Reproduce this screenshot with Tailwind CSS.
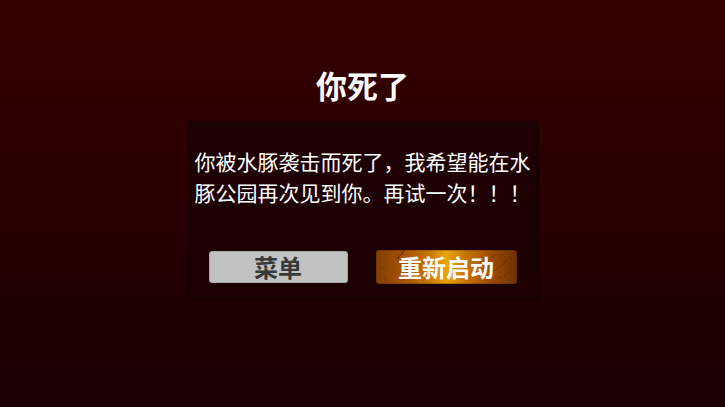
<!DOCTYPE html>
<html lang="zh-CN">
<head>
    <meta charset="UTF-8">
    <meta name="viewport" content="width=device-width, initial-scale=1.0">
    <title>你死了</title>
    <script src="https://cdn.jsdelivr.net/npm/@tailwindcss/browser@4"></script>
    <style>
        body {
            font-family: 'Noto Sans CJK SC', sans-serif;
        }
    </style>
</head>
<body class="bg-[#250001]">
    <main class="min-h-screen flex flex-col items-center px-4 pt-[65px] pb-8 text-white bg-linear-to-b from-[#360001] via-[#290001] to-[#1a0001]">
        <h1 class="text-[31px] leading-10 font-bold">你死了</h1>

        <!-- Message panel -->
        <section class="w-full max-w-[352px] mt-4 px-2 pt-6 pb-4 bg-[#1d0001] border border-[#140001]">
            <p class="-mx-px text-[21px] leading-[31px]">你被水豚袭击而死了，我希望能在水豚公园再次见到你。再试一次！！！</p>

            <div class="flex justify-center items-center gap-7 mt-[42px]">
                <button type="button" class="w-[139px] h-8 rounded-[3px] bg-[#c2c2c2] border border-[#a9a9a9] text-2xl leading-8 font-bold text-[#383838] flex items-center justify-center cursor-pointer">菜单</button>
                <button type="button" class="relative w-[141px] h-[34px] rounded-[3px] overflow-hidden bg-[linear-gradient(90deg,#823e04_0%,#a65304_20%,#c77804_38%,#eba404_50%,#c87604_63%,#a04d04_80%,#6d3003_100%)] text-2xl font-bold flex items-center justify-center cursor-pointer">
                    <!-- Scratched metal -->
                    <svg class="absolute inset-0 size-full" viewBox="0 0 141 34" preserveAspectRatio="none" fill="none" stroke="#4a1d02" stroke-width="1" aria-hidden="true">
                        <path d="M28 0l-2 4-3 2-1 3" stroke-opacity=".8"/>
                        <path d="M18 7l4-3M3 20l5-3M8 27l3 4M50 27l-3 4" stroke-opacity=".3"/>
                        <path d="M113 10l4-4 3-1M119 21l4-4 4-2 4-5M128 27l4-5M134 7l2 3M124 8l3-3M122 28l3-1" stroke-opacity=".4"/>
                        <rect x=".5" y=".5" width="140" height="33" rx="2.5" stroke-opacity=".3"/>
                    </svg>
                    <span class="relative">重新启动</span>
                </button>
            </div>
        </section>
    </main>
</body>
</html>
